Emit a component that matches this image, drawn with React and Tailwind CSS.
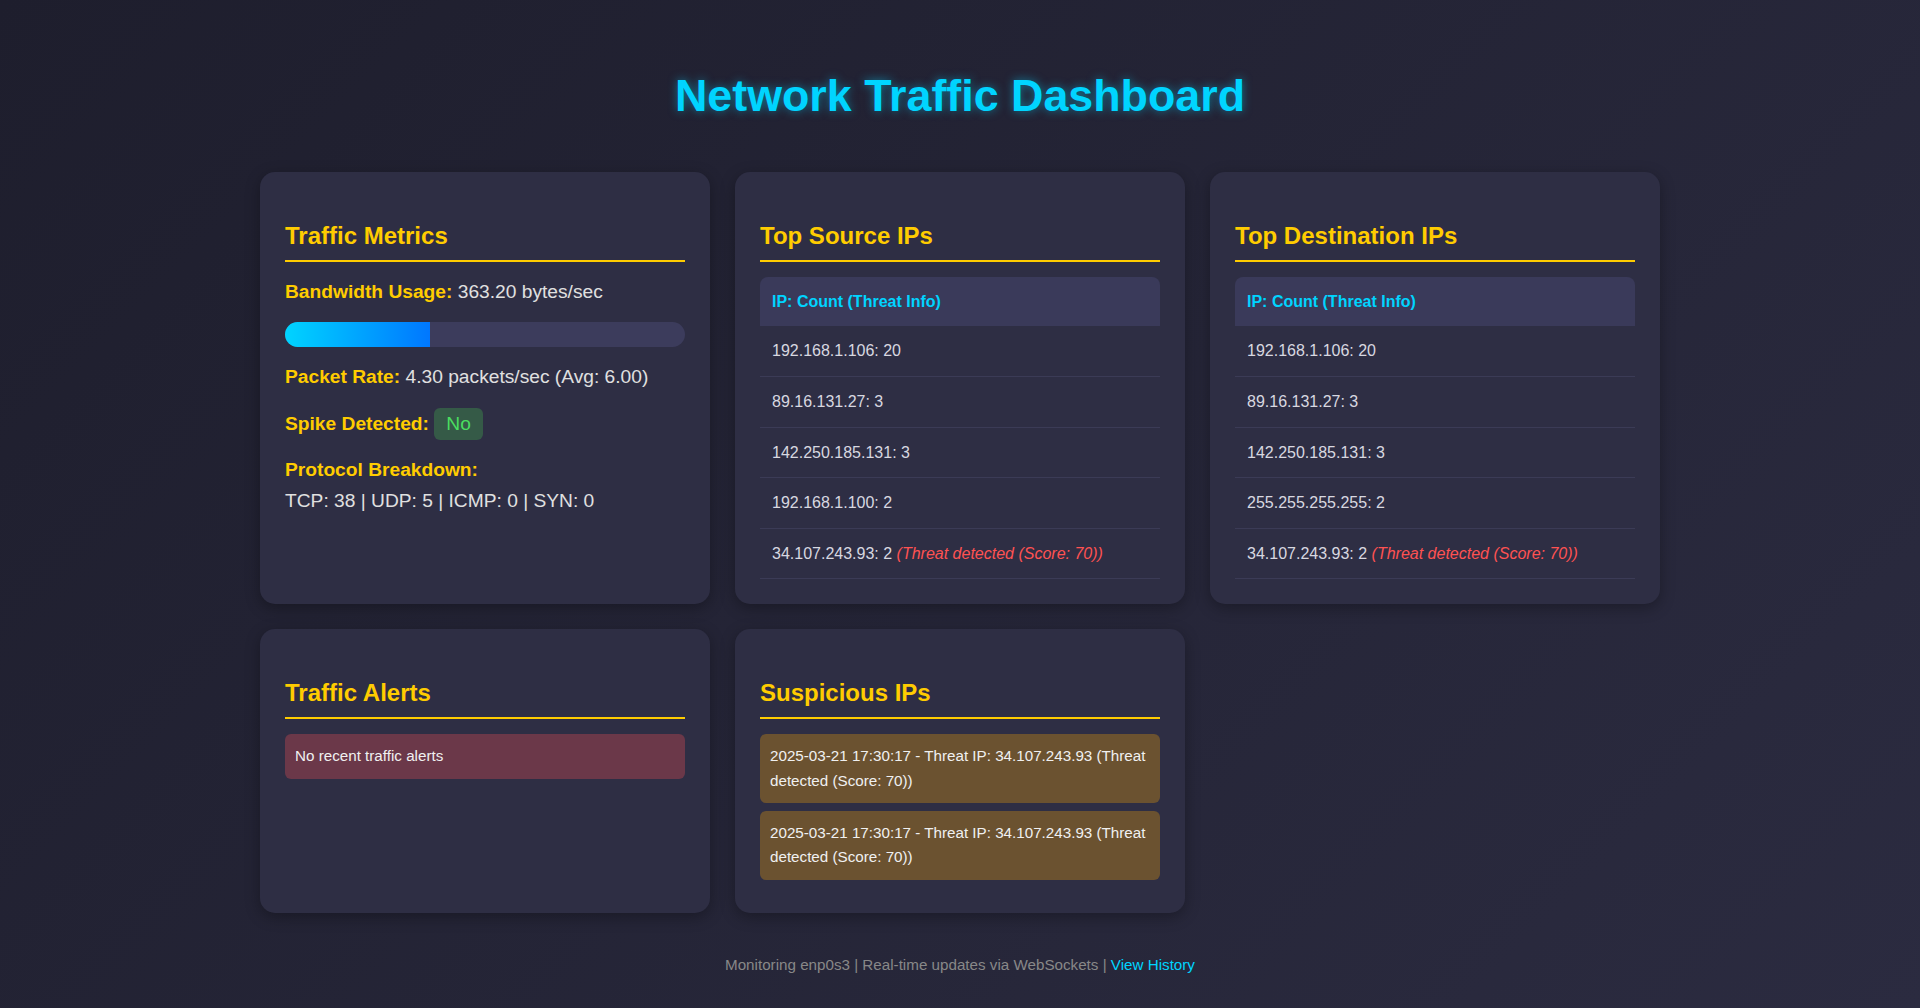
import React from "react";

const sourceIps = [
  { ip: "192.168.1.106", count: 20 },
  { ip: "89.16.131.27", count: 3 },
  { ip: "142.250.185.131", count: 3 },
  { ip: "192.168.1.100", count: 2 },
  { ip: "34.107.243.93", count: 2, threat: "(Threat detected (Score: 70))" },
];

const destIps = [
  { ip: "192.168.1.106", count: 20 },
  { ip: "89.16.131.27", count: 3 },
  { ip: "142.250.185.131", count: 3 },
  { ip: "255.255.255.255", count: 2 },
  { ip: "34.107.243.93", count: 2, threat: "(Threat detected (Score: 70))" },
];

const suspicious = [
  "2025-03-21 17:30:17 - Threat IP: 34.107.243.93 (Threat detected (Score: 70))",
  "2025-03-21 17:30:17 - Threat IP: 34.107.243.93 (Threat detected (Score: 70))",
];

function Card({ title, children }) {
  return (
    <div className="bg-[#2e2e44] rounded-[15px] p-[25px] shadow-[0_4px_15px_rgba(0,0,0,0.3)]">
      <h2 className="mt-[25px] text-[24px] leading-[28px] font-bold text-[#ffcc00] pb-[10px] border-b-2 border-[#ffcc00]">
        {title}
      </h2>
      {children}
    </div>
  );
}

function IpTable({ rows }) {
  return (
    <table className="w-full mt-[15px] border-separate border-spacing-0 text-[16px] leading-[1.6]">
      <thead>
        <tr>
          <th className="text-left font-bold p-[12px] bg-[#3a3a5a] text-[#00d4ff] rounded-tl-[8px] rounded-tr-[8px]">
            IP: Count (Threat Info)
          </th>
        </tr>
      </thead>
      <tbody>
        {rows.map((r) => (
          <tr key={r.ip}>
            <td className="p-[12px] border-b border-[#3b3b56] text-[#d8d8e0]">
              {r.ip}: {r.count}
              {r.threat && (
                <>
                  {" "}
                  <span className="italic text-[#ff5252]">{r.threat}</span>
                </>
              )}
            </td>
          </tr>
        ))}
      </tbody>
    </table>
  );
}

export default function App() {
  const bandwidthPct = 36.3;

  return (
    <div className="min-h-screen bg-[linear-gradient(135deg,#1e1e2d,#2b2b40)] font-['Liberation_Sans',Arial,sans-serif] text-[#e0e0e0] leading-[1.6]">
      <div className="max-w-[1400px] mx-auto pt-[69px] pb-[30px]">
        <h1 className="text-center text-[44.8px] leading-[1.2] font-bold text-[#00d4ff] [text-shadow:0_0_10px_rgba(0,212,255,0.5)] mb-[49px]">
          Network Traffic Dashboard
        </h1>

        <div className="grid grid-cols-3 gap-[25px]">
          <Card title="Traffic Metrics">
            <p className="mt-[15px] text-[19.2px]">
              <strong className="text-[#ffcc00]">Bandwidth Usage:</strong> 363.20 bytes/sec
            </p>
            <div className="mt-[15px] h-[25px] rounded-full bg-[#3c3c5c] overflow-hidden">
              <div
                className="h-full bg-[linear-gradient(90deg,#00d4ff,#0077ff)]"
                style={{ width: `${bandwidthPct}%` }}
              />
            </div>
            <p className="mt-[15px] text-[19.2px]">
              <strong className="text-[#ffcc00]">Packet Rate:</strong> 4.30 packets/sec (Avg: 6.00)
            </p>
            <p className="mt-[15px] text-[19.2px]">
              <strong className="text-[#ffcc00]">Spike Detected:</strong>{" "}
              <span className="inline-block px-[12px] py-[5px] leading-[1.15] rounded-[6px] bg-[#355a47] text-[#4ade60]">
                No
              </span>
            </p>
            <p className="mt-[15px] text-[19.2px]">
              <strong className="text-[#ffcc00]">Protocol Breakdown:</strong>
              <br />
              TCP: 38 | UDP: 5 | ICMP: 0 | SYN: 0
            </p>
          </Card>

          <Card title="Top Source IPs">
            <IpTable rows={sourceIps} />
          </Card>

          <Card title="Top Destination IPs">
            <IpTable rows={destIps} />
          </Card>

          <Card title="Traffic Alerts">
            <div className="mt-[15px]">
              <div className="mb-[8px] p-[10px] rounded-[6px] bg-[#6b3849] text-[15.2px] text-[#f0f0f0]">
                No recent traffic alerts
              </div>
            </div>
          </Card>

          <Card title="Suspicious IPs">
            <div className="mt-[15px]">
              {suspicious.map((s, i) => (
                <div
                  key={i}
                  className="mb-[8px] p-[10px] rounded-[6px] bg-[#6b5230] text-[15.2px] text-[#f0f0f0]"
                >
                  {s}
                </div>
              ))}
            </div>
          </Card>
        </div>

        <p className="mt-[40px] text-center text-[15.2px] text-[#888888]">
          Monitoring enp0s3 | Real-time updates via WebSockets |{" "}
          <a href="#" className="text-[#00d4ff]">
            View History
          </a>
        </p>
      </div>
    </div>
  );
}
